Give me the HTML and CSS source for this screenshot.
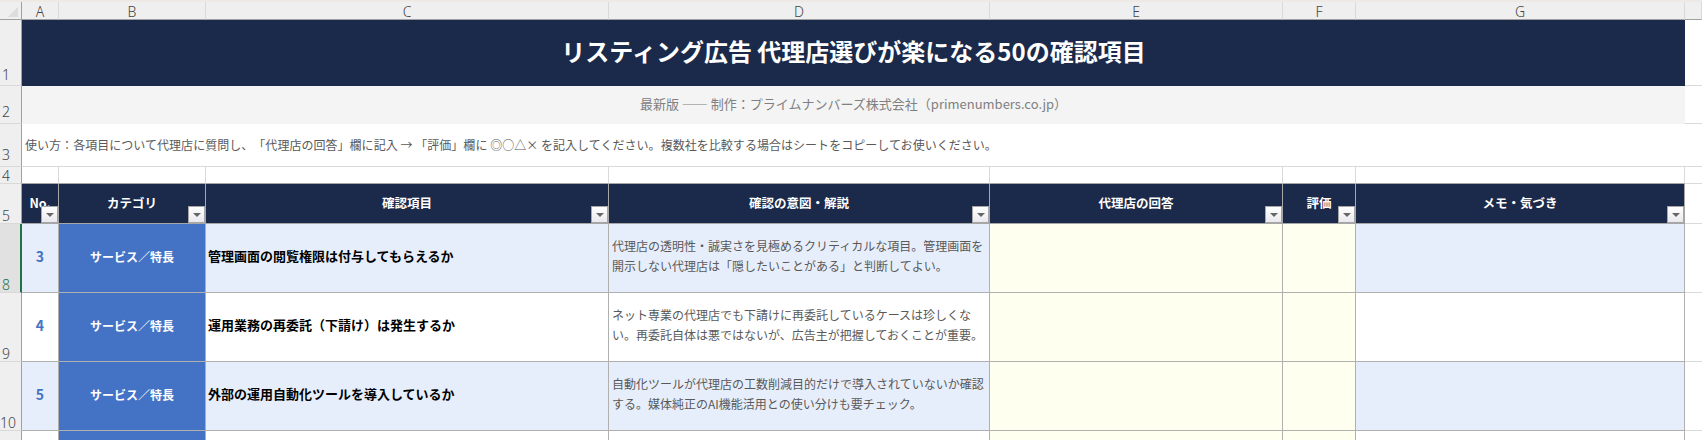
FILE: index.html
```html
<!DOCTYPE html>
<html lang="ja">
<head>
<meta charset="utf-8">
<title>リスティング広告 代理店選びが楽になる50の確認項目</title>
<link rel="stylesheet" href="styles.css">
</head>
<body>
<div class="strip"></div>
<div class="sheet">
  <div class="ch corner"><span class="select-all"></span></div>
  <div class="ch">A</div><div class="ch">B</div><div class="ch">C</div><div class="ch">D</div><div class="ch">E</div><div class="ch">F</div><div class="ch">G</div><div class="ch"></div>

  <div class="rh pad top">1</div>
  <div class="title span7">リスティング広告 代理店選びが楽になる50の確認項目</div>
  <div class="blank"></div>

  <div class="rh pad">2</div>
  <div class="subtitle span7">最新版 ―― 制作：プライムナンバーズ株式会社（primenumbers.co.jp）</div>
  <div class="blank"></div>

  <div class="rh pad">3</div>
  <div class="howto span7">使い方：各項目について代理店に質問し、「代理店の回答」欄に記入 → 「評価」欄に ◎○△× を記入してください。複数社を比較する場合はシートをコピーしてお使いください。</div>
  <div class="blank"></div>

  <div class="rh">4</div>
  <div class="blank dark"></div><div class="blank dark"></div><div class="blank dark"></div><div class="blank dark"></div><div class="blank dark"></div><div class="blank dark"></div><div class="blank dark"></div><div class="blank"></div>

  <div class="rh">5</div>
  <div class="th">No.<span class="filter"></span></div>
  <div class="th">カテゴリ<span class="filter"></span></div>
  <div class="th">確認項目<span class="filter"></span></div>
  <div class="th">確認の意図・解説<span class="filter"></span></div>
  <div class="th">代理店の回答<span class="filter"></span></div>
  <div class="th">評価<span class="filter"></span></div>
  <div class="th">メモ・気づき<span class="filter"></span></div>
  <div class="blank"></div>

  <div class="rh active">8</div>
  <div class="td no tint">3</div>
  <div class="td cat">サービス／特長</div>
  <div class="td item tint">管理画面の閲覧権限は付与してもらえるか</div>
  <div class="td desc tint">代理店の透明性・誠実さを見極めるクリティカルな項目。管理画面を<br>開示しない代理店は「隠したいことがある」と判断してよい。</div>
  <div class="td input"></div>
  <div class="td input"></div>
  <div class="td tint"></div>
  <div class="blank"></div>

  <div class="rh">9</div>
  <div class="td no">4</div>
  <div class="td cat">サービス／特長</div>
  <div class="td item">運用業務の再委託（下請け）は発生するか</div>
  <div class="td desc">ネット専業の代理店でも下請けに再委託しているケースは珍しくな<br>い。再委託自体は悪ではないが、広告主が把握しておくことが重要。</div>
  <div class="td input"></div>
  <div class="td input"></div>
  <div class="td"></div>
  <div class="blank"></div>

  <div class="rh wide">10</div>
  <div class="td no tint">5</div>
  <div class="td cat">サービス／特長</div>
  <div class="td item tint">外部の運用自動化ツールを導入しているか</div>
  <div class="td desc tint">自動化ツールが代理店の工数削減目的だけで導入されていないか確認<br>する。媒体純正のAI機能活用との使い分けも要チェック。</div>
  <div class="td input"></div>
  <div class="td input"></div>
  <div class="td tint"></div>
  <div class="blank"></div>

  <div class="rh"></div>
  <div class="td"></div>
  <div class="td cat"></div>
  <div class="td"></div>
  <div class="td"></div>
  <div class="td input"></div>
  <div class="td input"></div>
  <div class="td"></div>
  <div class="blank"></div>
</div>
</body>
</html>
```

FILE: styles.css
```css
* { box-sizing: border-box; }
html, body { margin: 0; height: 440px; overflow: hidden; background: #fff; }
body {
  font-family: "Noto Sans CJK JP", "Noto Sans", sans-serif;
  text-spacing-trim: space-all;
}

.strip { height: 2px; background: #efe9e6; }

.sheet {
  display: grid;
  grid-template-columns: 22px 37px 147px 403px 381px 293px 73px 329px 17px;
  grid-template-rows: 18px 66px 38px 43px 17px 40px 69px 69px 69px 69px;
  height: 438px;
  overflow: hidden;
}

/* column headers */
.ch {
  background: #efefef;
  border-right: 1px solid #d9d9d9;
  border-bottom: 1px solid #a0a0a0;
  color: #444;
  font: 300 14px/19px "Noto Sans", sans-serif;
  text-align: center;
}
.corner { border-right: 1px solid #a0a0a0; display: flex; padding: 5px 0 0 8px; }
.select-all {
  width: 0; height: 0;
  border-left: 10px solid transparent;
  border-bottom: 10px solid #dcdcdc;
}

/* row headers */
.rh {
  background: #efefef;
  border-right: 1px solid #a0a0a0;
  border-bottom: 1px solid #d9d9d9;
  color: #444;
  font: 300 14px/14px "Noto Sans", sans-serif;
  display: flex;
  align-items: flex-end;
  padding: 0 0 0 2px;
}
.rh.pad { padding-bottom: 4px; }
.rh.top { padding-bottom: 3px; }
.rh.wide { padding-left: 0; }
.rh.active {
  background: #e1e1e1;
  border-right: 2px solid #217346;
  color: #217346;
}

/* merged banner rows */
.span7 { grid-column: span 7; display: flex; align-items: center; white-space: nowrap; }
.title {
  background: #1b2a4a;
  color: #fff;
  font-size: 24px;
  font-weight: 700;
  justify-content: center;
  padding-bottom: 6px;
}
.subtitle {
  background: #f4f4f4;
  color: #808080;
  font-size: 13px;
  justify-content: center;
  padding-bottom: 4px;
}
.howto {
  border-bottom: 1px solid #d9d9d9;
  color: #595959;
  font-size: 12px;
  letter-spacing: 0.035px;
  padding: 0 0 1px 3px;
}

.blank { border-bottom: 1px solid #d9d9d9; }
.blank.dark { border-right: 1px solid #d9d9d9; border-bottom-color: #a6a6a6; }

/* table header */
.th {
  position: relative;
  background: #1b2a4a;
  border-right: 1px solid #a6a6a6;
  border-bottom: 1px solid #a6a6a6;
  color: #fff;
  font-size: 12.5px;
  font-weight: 700;
  display: flex;
  align-items: center;
  justify-content: center;
  padding-bottom: 3px;
}
.filter {
  position: absolute;
  right: 0;
  bottom: 0;
  width: 17px;
  height: 17px;
  border: 1px solid #a6a6a6;
  background: linear-gradient(#fff, #e9e9ee);
  display: flex;
  align-items: center;
  justify-content: center;
}
.filter::after {
  content: "";
  width: 0; height: 0;
  border-left: 4px solid transparent;
  border-right: 4px solid transparent;
  border-top: 4px solid #666;
}

/* table body */
.td {
  border-right: 1px solid #b0b0b0;
  border-bottom: 1px solid #b0b0b0;
  display: flex;
  align-items: center;
  white-space: nowrap;
}
.tint { background: #e7eefb; }
.input { background: #fffff0; }
.no {
  justify-content: center;
  color: #4472c4;
  font-size: 14px;
  font-weight: 700;
  padding-bottom: 5px;
}
.cat {
  background: #4472c4;
  color: #fff;
  font-size: 12px;
  font-weight: 700;
  justify-content: center;
  padding-bottom: 4px;
}
.item {
  color: #000;
  font-size: 13px;
  font-weight: 700;
  padding: 0 0 5px 2px;
}
.desc {
  color: #595959;
  font-size: 12px;
  line-height: 20px;
  padding: 0 0 4px 3px;
}
```
